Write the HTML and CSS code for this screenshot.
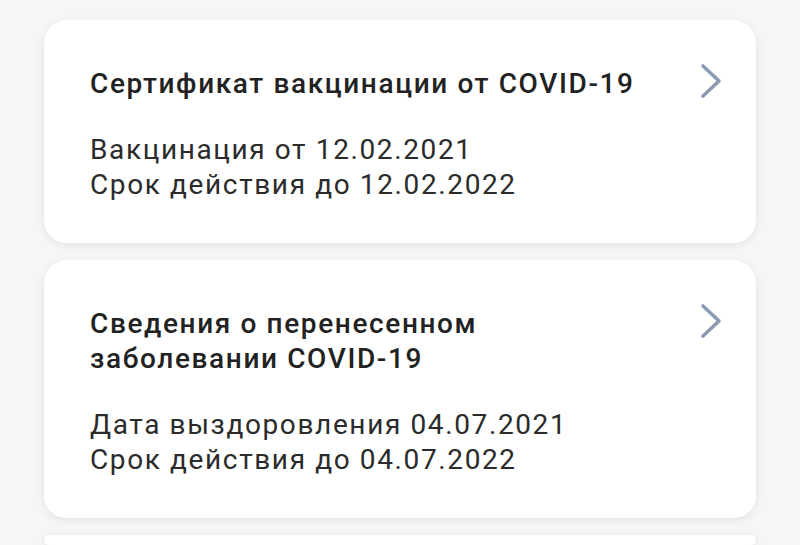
FILE: index.html
```html
<!DOCTYPE html>
<html lang="ru">
<head>
    <meta charset="UTF-8">
    <title>Сертификаты</title>
    <link rel="stylesheet" href="styles.css">
</head>
<body>
    <div id="wrap">
        <div class="card">
            <div class="card-text">
                <h2>Сертификат вакцинации от COVID-19</h2>
                <p>Вакцинация от 12.02.2021<br>Срок действия до 12.02.2022</p>
            </div>
            <svg class="arrow" width="24" height="36" viewBox="0 0 24 36"><path d="M4 3 L20 18 L4 33" fill="none" stroke="#8c9bb3" stroke-width="3.6" stroke-linecap="round" stroke-linejoin="round"/></svg>
        </div>
        <div class="card">
            <div class="card-text">
                <h2>Сведения о перенесенном<br>заболевании COVID-19</h2>
                <p>Дата выздоровления 04.07.2021<br>Срок действия до 04.07.2022</p>
            </div>
            <svg class="arrow" width="24" height="36" viewBox="0 0 24 36"><path d="M4 3 L20 18 L4 33" fill="none" stroke="#8c9bb3" stroke-width="3.6" stroke-linecap="round" stroke-linejoin="round"/></svg>
        </div>
        <div class="card card-cut"></div>
    </div>
</body>
</html>
```

FILE: styles.css
```css
*{margin:0;padding:0;}
html,body{width:100%;height:100%;overflow:hidden;}
body{background:#f6f6f6;font-family:Roboto,"Noto Sans",sans-serif;}
#wrap{padding:20px 44px 0;display:flex;flex-direction:column;gap:17px;}
.card {
    display: flex;
    justify-content: space-between;
    align-items: flex-start;
    background: #fff;
    border-radius: 22px;
    box-shadow: 0 2px 8px rgba(0,0,0,0.09);
    padding: 46px 33px 41px 46px;
}
.card-text h2{font-size:28px;line-height:35px;letter-spacing:1.62px;font-weight:500;color:#222;margin-bottom:31px;}
.card-text p{font-size:28px;line-height:35px;letter-spacing:1.62px;font-weight:400;color:#2b2b2b;}
.arrow{margin-top:-3px;flex-shrink:0;}
.card-cut{height:10px;padding:0;}
```
